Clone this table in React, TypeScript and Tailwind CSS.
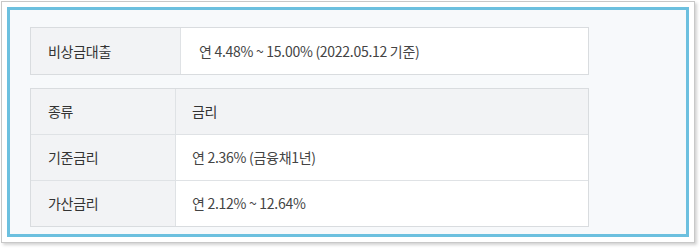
import React from 'react';

const rows = [
  { label: '기준금리', value: '연 2.36% (금융채1년)' },
  { label: '가산금리', value: '연 2.12% ~ 12.64%' },
];

export default function App() {
  return (
    <div
      className="w-[700px] h-[248px] bg-white pl-px pt-px"
      style={{ fontFamily: '"Noto Sans CJK KR", "Noto Sans", sans-serif' }}
    >
      <div className="w-[694px] h-[242px] border border-[#c8c8c8] bg-white p-[5px] shadow-[2px_2px_3px_rgba(0,0,0,0.18)]">
        <div className="h-full border-[3px] border-[#6cc0df] bg-[#f7f9fb] pl-[20px] pt-[17px]">
          {/* Summary */}
          <div className="flex w-[559px] h-[48px] border border-[#d9dcdf] text-[14px] tracking-[-0.02em]">
            <div className="w-[150px] flex items-center pl-[17px] bg-[#f2f3f5] border-r border-[#dfe2e5] text-[#333]">
              비상금대출
            </div>
            <div className="flex-1 flex items-center pl-[18px] bg-white text-[#444]">
              연 4.48% ~ 15.00% (2022.05.12 기준)
            </div>
          </div>

          {/* Rate table */}
          <div className="mt-[13px] w-[559px] border border-[#d9dcdf] text-[14px] tracking-[-0.02em]">
            <div className="flex h-[45px] bg-[#f2f3f5] text-[#333]">
              <div className="w-[145px] flex items-center pl-[17px] border-r border-[#dfe2e5]">종류</div>
              <div className="flex-1 flex items-center pl-[16px]">금리</div>
            </div>
            {rows.map((r) => (
              <div key={r.label} className="flex h-[46px] border-t border-[#dfe2e5]">
                <div className="w-[145px] flex items-center pl-[17px] bg-[#f2f3f5] border-r border-[#dfe2e5] text-[#333]">
                  {r.label}
                </div>
                <div className="flex-1 flex items-center pl-[16px] bg-white text-[#444]">{r.value}</div>
              </div>
            ))}
          </div>
        </div>
      </div>
    </div>
  );
}
